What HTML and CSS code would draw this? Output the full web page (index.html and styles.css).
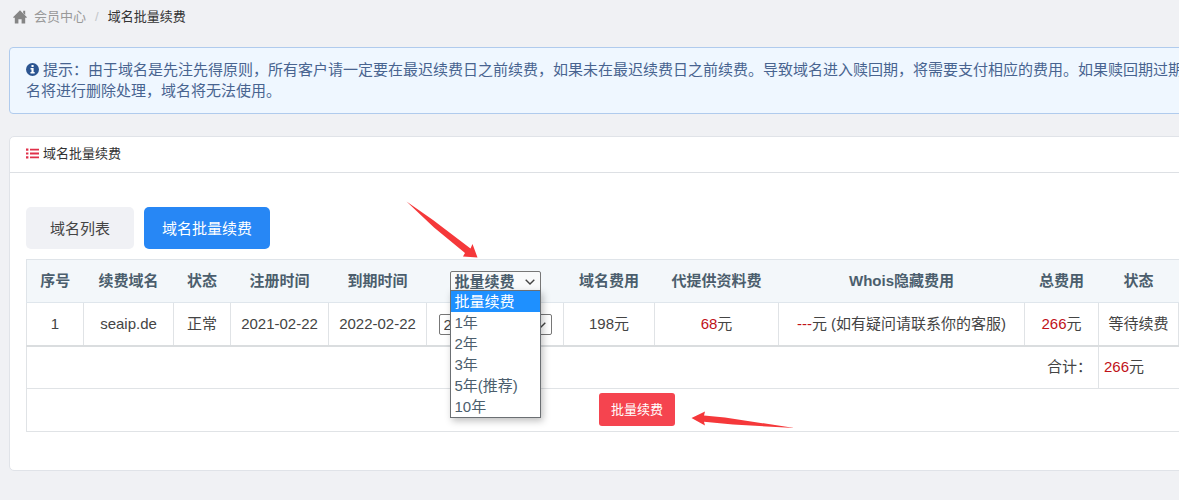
FILE: index.html
```html
<!DOCTYPE html>
<html lang="zh-CN">
<head>
<meta charset="utf-8">
<title>域名批量续费</title>
<link rel="stylesheet" href="styles.css">
</head>
<body>
<div class="page">
  <nav class="breadcrumb" aria-label="breadcrumb">
    <svg class="home-icon" viewBox="0 0 14 14" aria-hidden="true"><path d="M7 .3 14 7.200 13 8.100 12.200 7.400V13.500H8.600V9.200H5.400V13.500H1.800V7.400L1 8.100 0 7.200ZM10.200.800H12.200V5L10.200 3Z"/></svg>
    <a href="#">会员中心</a>
    <span class="slash">/</span>
    <span class="current">域名批量续费</span>
  </nav>

  <p class="alert"><svg class="info-icon" viewBox="0 0 14 14" aria-hidden="true"><circle cx="7" cy="7" r="7" fill="#2c5591"/><path fill="#fff" d="M5.9 2.2h2.3v2.1H5.900zM4.900 5.400h3.300v4.300h1.100v1.600H4.800V9.700h1.100V7H4.900z"/></svg>提示：由于域名是先注先得原则，所有客户请一定要在最迟续费日之前续费，如果未在最迟续费日之前续费。导致域名进入赎回期，将需要支付相应的费用。如果赎回期过期域<br>名将进行删除处理，域名将无法使用。</p>

  <section class="card">
    <h1 class="card-title">
      <svg class="list-icon" viewBox="0 0 13 11" aria-hidden="true"><path d="M0 .5h2.4v2.2H0zM0 4.4h2.4v2.2H0zM0 8.3h2.4v2.2H0zM4 .7h9v1.8H4zM4 4.6h9v1.8H4zM4 8.5h9v1.8H4z"/></svg>
      域名批量续费
    </h1>
    <div class="card-body">
      <div class="tabs">
        <button type="button" class="tab">域名列表</button>
        <button type="button" class="tab active">域名批量续费</button>
      </div>
      <table class="domains">
        <colgroup>
          <col class="c-index"><col class="c-domain"><col class="c-state"><col class="c-date"><col class="c-date"><col class="c-term"><col class="c-fee"><col class="c-doc"><col class="c-whois"><col class="c-total"><col class="c-status"><col>
        </colgroup>
        <thead>
          <tr>
            <th>序号</th><th>续费域名</th><th>状态</th><th>注册时间</th><th>到期时间</th>
            <th>
              <div class="picker">
                <select class="batch" aria-label="批量续费年限"><option>批量续费</option><option>1年</option><option>2年</option><option>3年</option><option>5年(推荐)</option><option>10年</option></select>
                <svg class="chevron" viewBox="0 0 10 6" aria-hidden="true"><path d="M.7.7 5 5 9.300.7"/></svg>
                <ul class="menu">
                  <li class="selected">批量续费</li><li>1年</li><li>2年</li><li>3年</li><li>5年(推荐)</li><li>10年</li>
                </ul>
              </div>
            </th>
            <th>域名费用</th><th>代提供资料费</th><th>Whois隐藏费用</th><th>总费用</th><th>状态</th><th></th>
          </tr>
        </thead>
        <tbody>
          <tr>
            <td>1</td><td>seaip.de</td><td>正常</td><td>2021-02-22</td><td>2022-02-22</td>
            <td>
              <div class="picker">
                <select class="term" aria-label="续费年限"><option>2年</option></select>
                <svg class="chevron" viewBox="0 0 10 6" aria-hidden="true"><path d="M.7.7 5 5 9.300.7"/></svg>
              </div>
            </td>
            <td>198元</td><td><span class="price">68</span>元</td><td><span class="price">---</span>元 (如有疑问请联系你的客服)</td><td><span class="price">266</span>元</td><td>等待续费</td><td></td>
          </tr>
        </tbody>
        <tfoot>
          <tr class="sum"><td colspan="10" class="sum-label">合计：</td><td colspan="2" class="sum-value"><span class="price">266</span>元</td></tr>
          <tr><td colspan="12"><button type="button" class="submit">批量续费</button></td></tr>
        </tfoot>
      </table>
    </div>
  </section>

  <svg class="arrow arrow-menu" viewBox="0 0 72 57" aria-hidden="true"><path d="M.5.500 27 19 64.500 47.500 66.500 43 71.500 56.500 57 55.500 59 52 28 26.500Z"/></svg>
  <svg class="arrow arrow-submit" viewBox="0 0 104 18" aria-hidden="true"><path d="M.5 7 14 .5 13 4.500 34 6.500 103.500 17 42 13.500 13 10.700 14 14.500Z"/></svg>
</div>
</body>
</html>
```
FILE: styles.css
```css
* { box-sizing: border-box; }

body {
  margin: 0;
  overflow-x: hidden;
  background: #f0f1f4;
  color: #444;
  font: 15px/21px "Liberation Sans", "Noto Sans CJK SC", sans-serif;
}

button, select { font: inherit; color: inherit; }

.page {
  position: relative;
  min-width: 1274px;
  padding: 6px 9px 29px;
}

.breadcrumb {
  display: flex;
  align-items: center;
  gap: 7px;
  padding-left: 4px;
  font-size: 13px;
}
.breadcrumb a { color: #999; text-decoration: none; }
.slash { margin: 0 2px; color: #c4c6ca; }
.current { color: #333; }
.home-icon { width: 14px; height: 14px; fill: #858585; }

.alert {
  margin: 20px 0 22px;
  padding: 11px 16px 12px;
  border: 1px solid #b0cbed;
  border-radius: 4px;
  background: #eff7ff;
  color: #486490;
  white-space: nowrap;
}
.info-icon { width: 13px; height: 13px; margin-right: 4px; vertical-align: -1px; }

.card {
  border: 1px solid #e0e3e8;
  border-radius: 5px;
  background: #fff;
}
.card-title {
  display: flex;
  align-items: center;
  gap: 4px;
  margin: 0;
  padding: 6px 16px 8px;
  border-bottom: 1px solid #dde0e4;
  color: #333;
  font-size: 13px;
  font-weight: 400;
}
.list-icon { width: 13px; height: 11px; fill: #e0304a; }
.card-body { padding: 34px 16px 38px; }

.tabs { display: flex; gap: 10px; margin-bottom: 10px; }
.tab {
  padding: 11px 24px 10px;
  border: 0;
  border-radius: 5px;
  background: #f0f1f5;
}
.tab.active { padding-inline: 18px; background: #2787f5; color: #fff; }

.domains {
  width: 1222px;
  table-layout: fixed;
  border-collapse: collapse;
  border: 1px solid #dfe4e9;
}
.c-index { width: 57px; }
.c-domain { width: 90px; }
.c-state { width: 57px; }
.c-date { width: 98px; }
.c-term { width: 137px; }
.c-fee { width: 91px; }
.c-doc { width: 124px; }
.c-whois { width: 246px; }
.c-total { width: 74px; }
.c-status { width: 80px; }

th, td { height: 43px; padding: 0 0 1px; text-align: center; white-space: nowrap; }
th { background: #f3f7fa; color: #4b5e6d; border-bottom: 1px solid #dfe6ec; }
td { border: 1px solid #e0e3e6; }
.sum td { border-top: 2px solid #dadddf; }
.domains .sum-label { padding-right: 6px; text-align: right; }
.domains .sum-value { padding-left: 5px; text-align: left; }
.price { color: #bf1219; }

.picker { position: relative; display: inline-block; vertical-align: middle; }
.picker select {
  display: block;
  height: 21px;
  padding: 0 4px;
  border: 1px solid #777;
  border-radius: 2px;
  background: #fff;
  line-height: 19px;
  appearance: none;
}
.picker .batch { width: 91px; background: #f9fafb; font-weight: 700; }
.picker .term { width: 113px; }
.chevron {
  position: absolute;
  top: 8px;
  right: 6px;
  width: 10px;
  height: 6px;
  fill: none;
  stroke: #444;
  stroke-width: 1.4;
  pointer-events: none;
}
.menu {
  position: absolute;
  z-index: 2;
  top: 19px;
  left: 0;
  width: 100%;
  margin: 0;
  padding: 0;
  border: 1px solid #6b6f73;
  background: #fff;
  box-shadow: 2px 3px 7px rgba(0, 0, 0, .25);
  font-weight: 400;
  line-height: 21px;
  list-style: none;
  text-align: left;
}
.menu li { padding: 0 4px; }
.menu .selected { background: #1e90ff; color: #fff; }

.submit {
  display: block;
  margin: 0 auto;
  padding: 6px 12px;
  border: 0;
  border-radius: 3px;
  background: #f5444f;
  color: #fff;
  font-size: 13px;
}

.arrow { position: absolute; z-index: 3; fill: #f5383a; pointer-events: none; }
.arrow-menu { left: 406px; top: 201px; width: 72px; height: 57px; }
.arrow-submit { left: 691px; top: 411px; width: 104px; height: 18px; }
```
